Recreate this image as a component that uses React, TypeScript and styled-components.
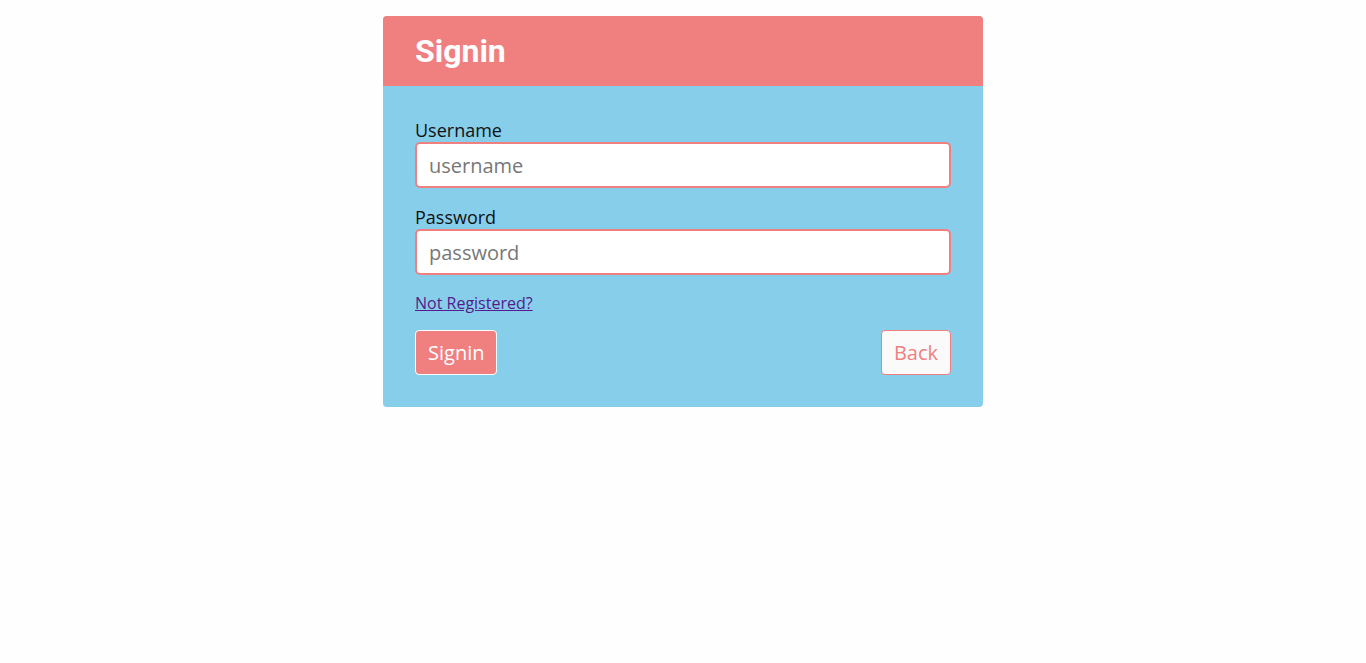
import React from 'react';
import styled, { createGlobalStyle } from "styled-components";

const GlobalStyle = createGlobalStyle`
	body {
		margin: 0;
		background: #fefefe;
		font-family: "Open Sans", "Liberation Sans", sans-serif;
	}
`;

const Page = styled.div`
	display: flex;
	justify-content: center;
	padding-top: 16px;
`;

const Card = styled.div`
	width: 600px;
	border-radius: 4px;
	overflow: hidden;
	background: #87ceeb;
`;

const Header = styled.div`
	height: 70px;
	display: flex;
	align-items: center;
	padding: 0 32px;
	background: #f08080;
`;

const Title = styled.h1`
	margin: 0;
	font-family: Roboto, "Liberation Sans", sans-serif;
	font-weight: 700;
	font-size: 32px;
	color: #fff;
`;

const Form = styled.form`
	display: flex;
	flex-direction: column;
	padding: 32px;
`;

const Field = styled.div`
	display: flex;
	flex-direction: column;
	margin-bottom: 17px;
`;

const Label = styled.label`
	font-size: 18px;
	line-height: 24px;
	color: #111;
`;

const Input = styled.input`
	height: 46px;
	box-sizing: border-box;
	border: 2px solid #f08080;
	border-radius: 5px;
	padding: 0 12px;
	font-family: "Open Sans", "Liberation Sans", sans-serif;
	font-size: 20px;
	outline: none;
	&::placeholder {
		color: #777;
	}
`;

const Link = styled.a`
	font-size: 16px;
	line-height: 22px;
	color: #551a8b;
	align-self: flex-start;
`;

const Actions = styled.div`
	display: flex;
	justify-content: space-between;
	margin-top: 16px;
`;

const Button = styled.button<{ $ghost?: boolean }>`
	font-family: "Open Sans", "Liberation Sans", sans-serif;
	font-size: 20px;
	line-height: 27px;
	padding: 8px 12px;
	border-radius: 4px;
	border: 1px solid ${p => p.$ghost ? "#f08080" : "#fff"};
	background: ${p => p.$ghost ? "#fafafa" : "#f08080"};
	color: ${p => p.$ghost ? "#f08080" : "#fff"};
	cursor: pointer;
`;

function App() {
	return (
		<>
			<GlobalStyle />
			<Page>
				<Card>
					<Header>
						<Title>Signin</Title>
					</Header>
					<Form onSubmit={e => e.preventDefault()}>
						<Field>
							<Label htmlFor="username">Username</Label>
							<Input id="username" placeholder="username" />
						</Field>
						<Field>
							<Label htmlFor="password">Password</Label>
							<Input id="password" type="password" placeholder="password" />
						</Field>
						<Link href="#">Not Registered?</Link>
						<Actions>
							<Button type="submit">Signin</Button>
							<Button type="button" $ghost>Back</Button>
						</Actions>
					</Form>
				</Card>
			</Page>
		</>
	);
}

export default App;
